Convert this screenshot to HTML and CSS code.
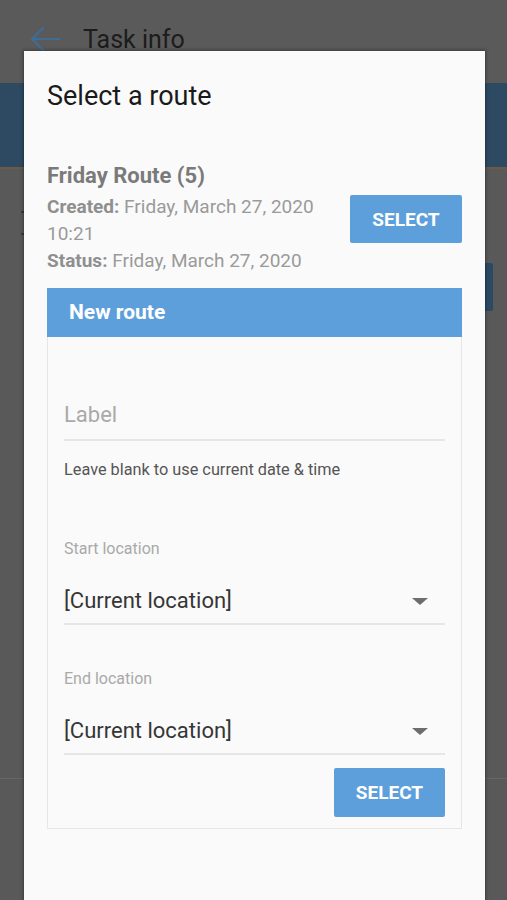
FILE: index.html
```html
<!DOCTYPE html>
<html lang="en">
<head>
<meta charset="utf-8">
<title>Select a route</title>
<link rel="stylesheet" href="styles.css">
</head>
<body>
<div class="page">
  <header class="appbar">
    <svg class="back" width="32" height="28" viewBox="0 0 32 28"><path d="M30 14H3M14 2L2 14l12 12" fill="none" stroke="#3f6c92" stroke-width="2.2"/></svg>
    <span class="appbar-title">Task info</span>
  </header>
  <div class="band"></div>
  <div class="content">
    <div class="content-row">
      <span class="mark"></span>
      <span class="bg-btn"></span>
    </div>
    <div class="divider"></div>
  </div>
</div>

<div class="dialog">
  <h1 class="dialog-title">Select a route</h1>

  <div class="route">
    <div class="route-info">
      <div class="route-name">Friday Route (5)</div>
      <div class="route-line"><b>Created:</b> Friday, March 27, 2020</div>
      <div class="route-line">10:21</div>
      <div class="route-line"><b>Status:</b> Friday, March 27, 2020</div>
    </div>
    <button class="btn">SELECT</button>
  </div>

  <section class="card">
    <div class="card-head">New route</div>
    <div class="card-body">
      <div class="field field-label"><span class="placeholder">Label</span></div>
      <div class="hint">Leave blank to use current date &amp; time</div>

      <div class="caption caption-start">Start location</div>
      <div class="field select"><span class="value">[Current location]</span><span class="caret"></span></div>

      <div class="caption caption-end">End location</div>
      <div class="field select"><span class="value">[Current location]</span><span class="caret"></span></div>

      <div class="actions"><button class="btn btn-card">SELECT</button></div>
    </div>
  </section>
</div>
</body>
</html>
```

FILE: styles.css
```css
* { box-sizing: border-box; }
html, body { margin: 0; padding: 0; }
body {
  width: 507px;
  height: 900px;
  overflow: hidden;
  background: #595959;
  font-family: Roboto, "Liberation Sans", sans-serif;
  position: relative;
}

/* dimmed page behind the dialog */
.page { height: 900px; }
.appbar {
  height: 83px;
  background: #5a5a5a;
  display: flex;
  align-items: center;
  padding-left: 30px;
}
.back { display: block; margin-top: -5px; }
.appbar-title {
  margin-left: 21px;
  margin-top: -4px;
  font-size: 25px;
  color: #1c1c1c;
}
.band {
  height: 86px;
  background: #2d4a62;
  border-bottom: 2px solid #6d5a45;
}
.content { padding-top: 42px; }
.content-row {
  display: flex;
  justify-content: space-between;
  align-items: flex-start;
  padding: 0 14px 0 21px;
}
.mark {
  width: 3px;
  height: 24px;
  border-top: 2px solid #3a3a3a;
  border-bottom: 2px solid #3a3a3a;
}
.bg-btn {
  width: 120px;
  height: 48px;
  margin-top: 52px;
  background: #2b4964;
  border-radius: 2px;
}
.divider {
  margin-top: 467px;
  height: 1px;
  background: #666;
}

/* dialog (overlays the page) */
.dialog {
  position: absolute;
  left: 24px;
  top: 51px;
  width: 461px;
  height: 849px;
  background: #fafafa;
  box-shadow: 0 0 3px 1px rgba(0,0,0,.35);
  padding: 29px 23px 0;
}
.dialog-title {
  margin: 0;
  font-size: 27px;
  line-height: 32px;
  font-weight: 400;
  color: #1a1a1a;
}

.route {
  margin-top: 50px;
  display: flex;
  justify-content: space-between;
  align-items: center;
}
.route-info { color: #9a9a9a; }
.route-name {
  font-size: 22px;
  line-height: 27px;
  font-weight: 700;
  color: #7a7a7a;
}
.route-line {
  font-size: 19px;
  line-height: 27px;
}
.route-name + .route-line { margin-top: 4px; }
.route-line b { font-weight: 700; color: #8f8f8f; }

.btn {
  width: 112px;
  height: 48px;
  border: 0;
  border-radius: 2px;
  background: #5d9fdb;
  color: #fff;
  font-family: Roboto, "Liberation Sans", sans-serif;
  font-size: 19px;
  font-weight: 700;
  padding: 0;
  margin-top: 2px;
}

.card { margin-top: 14px; }
.card-head {
  height: 49px;
  background: #5d9fdb;
  color: #fff;
  font-size: 21px;
  font-weight: 700;
  line-height: 49px;
  padding-left: 22px;
}
.card-body {
  border: 1px solid #e6e6e6;
  border-top: 0;
  padding: 0 16px 11px;
  height: 492px;
}

.field {
  border-bottom: 2px solid #e6e6e6;
  font-size: 22px;
  line-height: 30px;
}
.field-label { padding: 63px 0 9px; }
.placeholder { color: #a9a9a9; }

.hint {
  margin-top: 18px;
  font-size: 16.3px;
  line-height: 22px;
  color: #555;
}
.caption {
  font-size: 16px;
  line-height: 22px;
  color: #a9a9a9;
}
.caption-start { margin-top: 57px; }
.caption-end { margin-top: 43px; }

.select {
  margin-top: 26px;
  padding-bottom: 7px;
  display: flex;
  justify-content: space-between;
  align-items: center;
}
.value { color: #363636; }
.caret {
  width: 0;
  height: 0;
  margin-right: 17px;
  border-left: 8px solid transparent;
  border-right: 8px solid transparent;
  border-top: 7px solid #6d6d6d;
}

.actions {
  display: flex;
  justify-content: flex-end;
  margin-top: 13px;
}
.btn-card { width: 111px; height: 49px; margin-top: 0; }
```
